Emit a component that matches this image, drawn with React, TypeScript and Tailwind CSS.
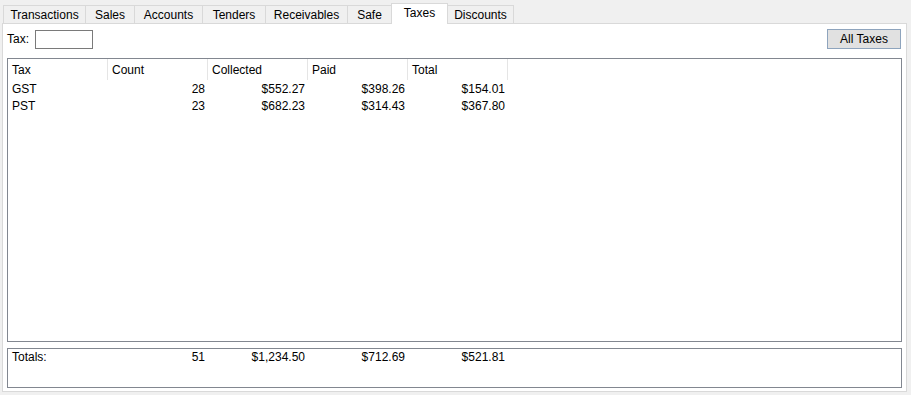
import React from "react";

const tabs = ["Transactions", "Sales", "Accounts", "Tenders", "Receivables", "Safe", "Taxes", "Discounts"];
const tabW = [82, 49, 68, 63, 82, 44, 56, 66];

const rows = [
  ["GST", "28", "$552.27", "$398.26", "$154.01"],
  ["PST", "23", "$682.23", "$314.43", "$367.80"],
];

export default function App() {
  return (
    <div
      className="w-[911px] h-[395px] bg-[#f0f0f0] text-[12px] text-black overflow-hidden"
      style={{ fontFamily: '"Liberation Sans", Arial, sans-serif' }}
    >
      <div className="flex pl-[4px] h-[23px] items-end">
        {tabs.map((t, i) => {
          const sel = t === "Taxes";
          return (
            <div
              key={t}
              className={
                sel
                  ? "h-[21px] bg-white border border-b-0 border-[#d9d9d9] flex items-center justify-center pb-[2px] relative z-10 -mb-px -ml-px"
                  : "h-[18px] bg-[#f0f0f0] border border-b-0 border-[#d9d9d9] flex items-center justify-center -ml-px"
              }
              style={{ width: tabW[i] + 1 }}
            >
              {t}
            </div>
          );
        })}
      </div>
      <div className="mx-[2px] w-[905px] h-[369px] border border-[#d9d9d9] bg-white flex flex-col px-[4px]">
        <div className="flex items-center justify-between mt-[5px] h-[20px]">
          <div className="flex items-center">
            <span>Tax:</span>
            <div className="ml-[6px] w-[58px] h-[19px] border border-[#7a7a7a] bg-white" />
          </div>
          <div className="mr-[1px] w-[74px] h-[20px] border border-[#8ea4bd] bg-[#e1e1e1] flex items-center justify-center">
            All Taxes
          </div>
        </div>
        <div className="mt-[9px] w-[895px] h-[284px] border border-[#828790] bg-white">
          <div className="flex h-[21px]">
            {["Tax", "Count", "Collected", "Paid", "Total"].map((h) => (
              <div key={h} className="w-[100px] h-full border-r border-[#e5e5e5] pl-[4px] flex items-center">
                {h}
              </div>
            ))}
          </div>
          {rows.map((r) => (
            <div key={r[0]} className="flex h-[17px] items-center">
              {r.map((c, i) => (
                <div
                  key={i}
                  className={i === 0 ? "w-[100px] pl-[4px]" : "w-[100px] text-right pr-[3px]"}
                >
                  {c}
                </div>
              ))}
            </div>
          ))}
        </div>
        <div className="mt-[6px] w-[895px] h-[40px] border border-[#828790] bg-white">
          <div className="flex h-[15px] items-center">
            {["Totals:", "51", "$1,234.50", "$712.69", "$521.81"].map((c, i) => (
              <div
                key={i}
                className={i === 0 ? "w-[100px] pl-[4px]" : "w-[100px] text-right pr-[3px]"}
              >
                {c}
              </div>
            ))}
          </div>
        </div>
      </div>
    </div>
  );
}
